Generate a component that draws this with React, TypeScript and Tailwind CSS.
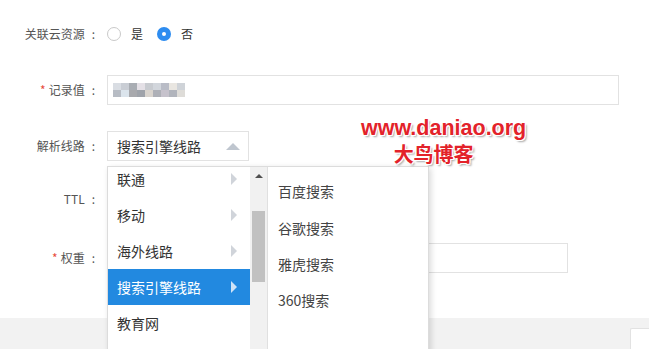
import React from 'react';

const cjk = "font-['Microsoft_YaHei','Noto_Sans_CJK_SC',sans-serif]";

const lines = [
  { name: '联通', active: false, sub: true },
  { name: '移动', active: false, sub: true },
  { name: '海外线路', active: false, sub: true },
  { name: '搜索引擎线路', active: true, sub: true },
  { name: '教育网', active: false, sub: false },
];

const engines = ['百度搜索', '谷歌搜索', '雅虎搜索', '360搜索'];

// blurred (mosaic) record value
const mosaic = [
  ['#d9dde3', '#c9cdd4', '#a9adb3', '#e4e0e6', '#c8cbd0', '#d2d6dc', '#b9bcc6', '#e9e6e1', '#cfd3d8'],
  ['#b7bcc4', '#dbe4ec', '#a8a9ad', '#9fa3aa', '#d9d4ce', '#aeb0b7', '#c6c2cc', '#b1b4bc', '#dedcd8'],
];

function Label({ text, required }: { text: string; required?: boolean }) {
  return (
    <div className="flex w-[95px] shrink-0 items-center justify-end text-[12px] text-[#555]">
      {required && <span className="mr-[3px] text-[#e74c3c]">*</span>}
      <span>{text}</span>
      <span className="ml-[7px]">:</span>
    </div>
  );
}

function Radio({ checked, label }: { checked?: boolean; label: string }) {
  return (
    <div className="flex items-center gap-[10px]">
      {checked ? (
        <span className="flex h-[14px] w-[14px] items-center justify-center rounded-full bg-[#2d8cf0]">
          <span className="h-[4px] w-[4px] rounded-full bg-white" />
        </span>
      ) : (
        <span className="h-[14px] w-[14px] rounded-full border border-[#c9c9c9] bg-white" />
      )}
      <span className="text-[12px] text-[#333]">{label}</span>
    </div>
  );
}

export default function App() {
  return (
    <div className={`relative flex h-[349px] w-[649px] flex-col overflow-hidden bg-white ${cjk}`}>
      <div className="flex flex-col gap-[26px] pt-[19px]">
        {/* 关联云资源 */}
        <div className="flex h-[30px] items-center">
          <Label text="关联云资源" />
          <div className="ml-[12px] flex items-center gap-[14px]">
            <Radio label="是" />
            <Radio checked label="否" />
          </div>
        </div>

        {/* 记录值 */}
        <div className="flex h-[30px] items-center">
          <Label text="记录值" required />
          <div className="ml-[12px] flex h-[30px] w-[512px] items-center border border-[#e2e2e2] pl-[5px]">
            <div className="flex flex-col">
              {mosaic.map((row, r) => (
                <div key={r} className="flex">
                  {row.map((c, i) => (
                    <span key={i} className="h-[7px] w-[8px]" style={{ backgroundColor: c }} />
                  ))}
                </div>
              ))}
            </div>
          </div>
        </div>

        {/* 解析线路 */}
        <div className="flex h-[30px] items-center">
          <Label text="解析线路" />
          <div className="ml-[12px] flex h-[30px] w-[142px] items-center justify-between border border-[#e2e2e2] pl-[9px] pr-[8px]">
            <span className="text-[14px] text-[#333]">搜索引擎线路</span>
            <span className="h-0 w-0 border-x-[7px] border-b-[7px] border-x-transparent border-b-[#bfc6cf]" />
          </div>
        </div>

        {/* TTL */}
        <div className="-mt-[3px] flex h-[30px] items-center">
          <Label text="TTL" />
        </div>

        {/* 权重 */}
        <div className="mt-[3px] flex h-[30px] items-center">
          <Label text="权重" required />
          <div className="ml-[12px] h-[30px] w-[461px] border border-[#e2e2e2]" />
        </div>
      </div>

      {/* footer */}
      <div className="mt-[45px] flex flex-1 justify-end bg-[#f2f2f2] pt-[10px]">
        <div className="h-[40px] w-[19px] rounded-tl-[2px] border border-r-0 border-[#e2e2e2] bg-white" />
      </div>

      {/* cascading dropdown */}
      <div className="absolute left-[107px] top-[166px] flex h-[200px] w-[322px] border border-[#dcdcdc] bg-white shadow-[2px_2px_6px_rgba(0,0,0,0.15)]">
        <div className="w-[142px] overflow-hidden">
          <div className="-mt-[6px]">
            {lines.map((l) => (
              <div
                key={l.name}
                className={`flex h-[36px] items-center justify-between pl-[9px] pr-[13px] text-[14px] ${
                  l.active ? 'bg-[#2289e0] text-white' : 'text-[#333]'
                }`}
              >
                <span>{l.name}</span>
                {l.sub && (
                  <span
                    className={`h-0 w-0 border-y-[6px] border-l-[6px] border-y-transparent ${
                      l.active ? 'border-l-[#cfe3f7]' : 'border-l-[#d0d4da]'
                    }`}
                  />
                )}
              </div>
            ))}
          </div>
        </div>
        <div className="flex w-[17px] flex-col items-center bg-[#f1f1f1] pt-[7px]">
          <span className="h-0 w-0 border-x-[4px] border-b-[4px] border-x-transparent border-b-[#505050]" />
          <div className="mt-[33px] h-[71px] w-[13px] bg-[#c1c1c1]" />
        </div>
        <div className="flex-1 border-l border-[#e0e0e0] pt-[6px]">
          {engines.map((e, i) => (
            <div key={e} className={`flex items-center pl-[10px] text-[14px] text-[#444] ${i === 0 ? 'h-[37px]' : 'h-[36px]'}`}>
              {e}
            </div>
          ))}
        </div>
      </div>

      {/* watermark */}
      <div className="absolute left-[361px] top-[116px] flex flex-col items-center font-bold text-[#e3222a] [text-shadow:1px_1px_0_#fff,-1px_-1px_0_#fff,1px_-1px_0_#fff,-1px_1px_0_#fff,2px_2px_2px_rgba(0,0,0,0.35)]">
        <span className="font-['Liberation_Sans',Arial,sans-serif] text-[21.5px] leading-[25px]">www.daniao.org</span>
        <span className="-ml-[20px] text-[20px] leading-[26px]">大鸟博客</span>
      </div>
    </div>
  );
}
